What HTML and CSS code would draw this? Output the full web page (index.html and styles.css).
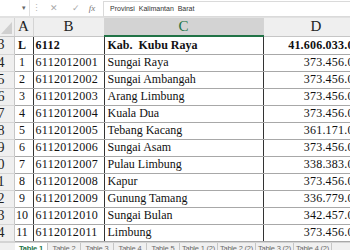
FILE: index.html
```html
<!DOCTYPE html>
<html lang="id">
<head>
  <meta charset="UTF-8" />
  <title>Table 1</title>
  <link rel="stylesheet" href="styles.css">
</head>
<body>
  <div class="sheet">
    <div class="formula-bar">
      <div class="name-box"><span class="caret">&#9662;</span></div>
      <span class="grip">&#8942;</span>
      <div class="fx-buttons">
        <span class="btn">&#10005;</span>
        <span class="btn">&#10003;</span>
        <span class="btn fx">fx</span>
      </div>
      <div class="formula-input">Provinsi&nbsp; Kalimantan&nbsp; Barat</div>
    </div>

    <table class="grid">
      <colgroup>
        <col class="w-row" />
        <col class="w-a" />
        <col class="w-b" />
        <col class="w-c" />
        <col class="w-d" />
      </colgroup>
      <thead>
        <tr>
          <th class="corner"><span class="tri"></span></th>
          <th>A</th>
          <th>B</th>
          <th class="active">C</th>
          <th>D</th>
        </tr>
      </thead>
      <tbody>
        <tr class="total">
          <th class="rownum">3</th>
          <td class="no">L</td>
          <td class="code">6112</td>
          <td class="name">Kab.&nbsp; Kubu Raya</td>
          <td class="amount">41.606.033.000</td>
        </tr>
        <tr>
          <th class="rownum">4</th>
          <td class="no">1</td>
          <td class="code">6112012001</td>
          <td class="name">Sungai Raya</td>
          <td class="amount">373.456.000</td>
        </tr>
        <tr>
          <th class="rownum">5</th>
          <td class="no">2</td>
          <td class="code">6112012002</td>
          <td class="name">Sungai Ambangah</td>
          <td class="amount">373.456.000</td>
        </tr>
        <tr>
          <th class="rownum">6</th>
          <td class="no">3</td>
          <td class="code">6112012003</td>
          <td class="name">Arang Limbung</td>
          <td class="amount">373.456.000</td>
        </tr>
        <tr>
          <th class="rownum">7</th>
          <td class="no">4</td>
          <td class="code">6112012004</td>
          <td class="name">Kuala Dua</td>
          <td class="amount">373.456.000</td>
        </tr>
        <tr>
          <th class="rownum">8</th>
          <td class="no">5</td>
          <td class="code">6112012005</td>
          <td class="name">Tebang Kacang</td>
          <td class="amount">361.171.000</td>
        </tr>
        <tr>
          <th class="rownum">9</th>
          <td class="no">6</td>
          <td class="code">6112012006</td>
          <td class="name">Sungai Asam</td>
          <td class="amount">373.456.000</td>
        </tr>
        <tr>
          <th class="rownum">10</th>
          <td class="no">7</td>
          <td class="code">6112012007</td>
          <td class="name">Pulau Limbung</td>
          <td class="amount">338.383.000</td>
        </tr>
        <tr>
          <th class="rownum">11</th>
          <td class="no">8</td>
          <td class="code">6112012008</td>
          <td class="name">Kapur</td>
          <td class="amount">373.456.000</td>
        </tr>
        <tr>
          <th class="rownum">12</th>
          <td class="no">9</td>
          <td class="code">6112012009</td>
          <td class="name">Gunung Tamang</td>
          <td class="amount">336.779.000</td>
        </tr>
        <tr>
          <th class="rownum">13</th>
          <td class="no">10</td>
          <td class="code">6112012010</td>
          <td class="name">Sungai Bulan</td>
          <td class="amount">342.457.000</td>
        </tr>
        <tr>
          <th class="rownum">14</th>
          <td class="no">11</td>
          <td class="code">6112012011</td>
          <td class="name">Limbung</td>
          <td class="amount">373.456.000</td>
        </tr>
      </tbody>
    </table>

    <div class="tabs">
      <span class="tab current">Table 1</span>
      <span class="tab">Table 2</span>
      <span class="tab">Table 3</span>
      <span class="tab">Table 4</span>
      <span class="tab">Table 5</span>
      <span class="tab wide">Table 1 (2)</span>
      <span class="tab wide">Table 2 (2)</span>
      <span class="tab wide">Table 3 (2)</span>
      <span class="tab wide">Table 4 (2)</span>
    </div>
  </div>
</body>
</html>
```

FILE: styles.css
```css
body {
  margin: 0;
  background: #ffffff;
  overflow: hidden;
}
.sheet {
  width: 350px;
  height: 250px;
  overflow: hidden;
  display: flex;
  flex-direction: column;
  background: #e6e6e6;
}

/* formula bar */
.formula-bar {
  height: 16px;
  flex: none;
  display: flex;
  align-items: center;
  background: #ffffff;
  border-bottom: 2px solid #e1e1e1;
  font-family: 'Liberation Sans', sans-serif;
}
.name-box {
  width: 30px;
  height: 16px;
  display: flex;
  justify-content: flex-end;
  align-items: center;
  box-sizing: border-box;
  padding-right: 3px;
  border-right: 1px solid #e1e1e1;
}
.caret {
  font-size: 7px;
  color: #666;
}
.grip {
  width: 13px;
  text-align: center;
  font-size: 9px;
  color: #b5b5b5;
}
.fx-buttons {
  width: 60px;
  display: flex;
  align-items: center;
}
.btn {
  width: 22px;
  text-align: center;
  font-size: 9px;
  color: #a9a9a9;
}
.fx {
  width: 10px;
  font-family: 'Liberation Serif', serif;
  font-style: italic;
  font-size: 9px;
  color: #777;
}
.formula-input {
  flex: 1;
  height: 14px;
  line-height: 14px;
  margin-top: 1px;
  padding-left: 6px;
  border: 1px solid #dadada;
  border-right: none;
  font-size: 7px;
  color: #333;
  white-space: nowrap;
}

/* grid */
.grid {
  flex: none;
  width: 369px;
  table-layout: fixed;
  border-collapse: collapse;
  background: #ffffff;
  font-family: 'Liberation Serif', serif;
}
.w-row { width: 14px; }
.w-a { width: 19px; }
.w-b { width: 71px; }
.w-c { width: 159px; }
.w-d { width: 106px; }

.grid thead th {
  height: 18px;
  padding: 0;
  background: #efefef;
  color: #222;
  font-weight: normal;
  font-size: 15px;
  border-right: 1px solid #d4d4d4;
  border-bottom: 1px solid #c6c6c6;
  box-sizing: border-box;
}
.grid thead th.active {
  background: #d3d3d3;
  color: #217346;
  border-bottom: 2px solid #217346;
}
.grid thead th.corner {
  position: relative;
}
.tri {
  position: absolute;
  right: 2px;
  bottom: 2px;
  width: 0;
  height: 0;
  border-left: 11px solid transparent;
  border-bottom: 12px solid #cfcfcf;
}

.grid tbody tr {
  height: 17px;
}
.grid tbody tr.total {
  height: 18px;
}
.grid .rownum {
  padding: 0 9px 0 0;
  background: #efefef;
  color: #222;
  font-weight: normal;
  font-size: 14px;
  text-align: right;
  direction: rtl;
  overflow: hidden;
  white-space: nowrap;
  border-bottom: 1px solid #d4d4d4;
  border-right: 1px solid #c6c6c6;
}
.grid td {
  padding: 0 3px;
  font-size: 12px;
  color: #111;
  white-space: nowrap;
  overflow: hidden;
  border-bottom: 1px solid #a8a8a8;
}
.grid td.no {
  text-align: center;
  padding: 0 3px 0 0;
  border-right: 1px solid #333;
}
.grid td.code {
  letter-spacing: 0.3px;
  padding-left: 2px;
  border-right: 1px solid #333;
}
.grid td.name {
  border-right: 1px solid #333;
}
.grid td.amount {
  text-align: right;
  letter-spacing: 0.2px;
}
.grid tr.total td {
  font-weight: bold;
}

/* sheet tabs */
.tabs {
  flex: 1;
  display: flex;
  align-items: flex-start;
  padding-left: 15px;
  background: #f0f0f0;
  border-top: 1px solid #d4d4d4;
  font-family: 'Liberation Sans', sans-serif;
  font-size: 7.5px;
  letter-spacing: -0.2px;
  color: #6a6a6a;
}
.tab {
  flex: none;
  width: 33px;
  height: 20px;
  padding-top: 1px;
  box-sizing: border-box;
  text-align: center;
  white-space: nowrap;
  border-right: 1px solid #c6c6c6;
}
.tab.wide {
  width: 38px;
}
.tab.current {
  background: #ffffff;
  color: #217346;
  font-weight: bold;
}
```
